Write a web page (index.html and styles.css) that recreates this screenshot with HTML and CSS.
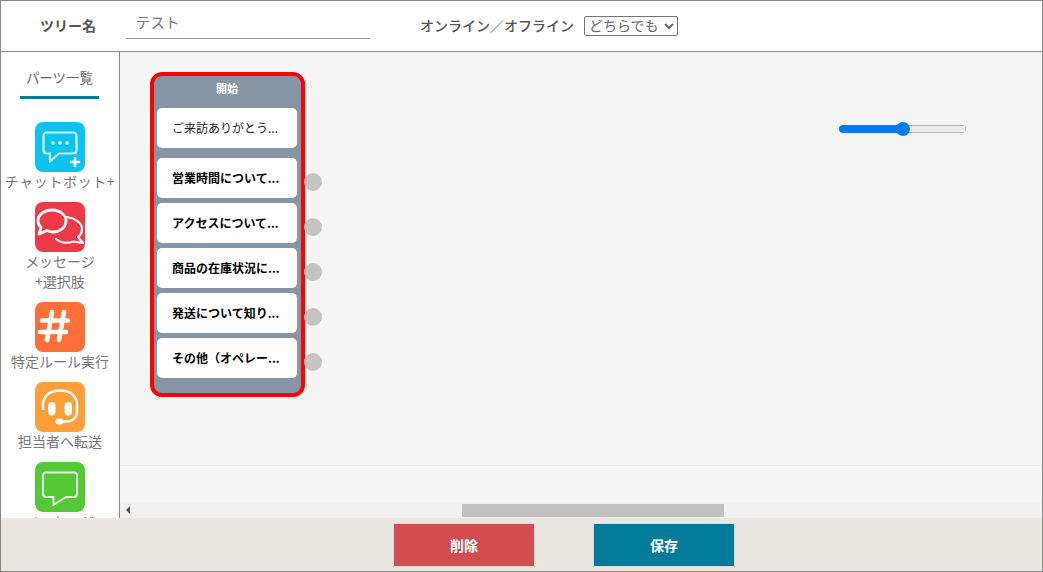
FILE: index.html
```html
<!DOCTYPE html>
<html lang="ja">
<head>
<meta charset="utf-8">
<title>ツリー</title>
<link rel="stylesheet" href="styles.css">
</head>
<body>
<div class="app">
  <header class="top">
    <label class="top-label name-label">ツリー名</label>
    <div class="name-field">テスト</div>
    <label class="top-label online-label">オンライン／オフライン</label>
    <select class="online-select"><option>どちらでも</option></select>
  </header>
  <div class="middle">
    <aside class="side">
      <div class="tab"><span class="tab-text">パーツ一覧</span></div>
      <div class="parts">
        <div class="part">
          <svg class="part-icon" viewBox="0 0 50 50"><rect width="50" height="50" rx="8" fill="#0cc3ef"/><path d="M12 10.500H38Q41.500 10.500 41.500 14V28Q41.500 31.500 38 31.500H24L15 39.500V31.500H12Q8.500 31.500 8.500 28V14Q8.500 10.500 12 10.500Z" fill="none" stroke="#fff" stroke-width="2.200" stroke-linejoin="round" opacity=".8"/><circle cx="18" cy="21" r="1.800" fill="#fff"/><circle cx="25" cy="21" r="1.800" fill="#fff"/><circle cx="32" cy="21" r="1.800" fill="#fff"/><path d="M40 36V44M36 40H44" stroke="#fff" stroke-width="2.600" stroke-linecap="round"/></svg>
          <div class="part-label part-label-wide">チャットボット+</div>
        </div>
        <div class="part">
          <svg class="part-icon" viewBox="0 0 50 50"><rect width="50" height="50" rx="8" fill="#ee3a46"/><path d="M32 15C40 16 47 21 47 27C47 30 46 33 43 35L48 41L38 39.500C31 42 26 41 21 37" fill="none" stroke="#fff" stroke-width="2.200" stroke-linejoin="round" stroke-linecap="round"/><path d="M17 8C25 8 31 13 31 19C31 26 24 30 18 30C16 30 14 29.500 12 28.500L4 32L6 25.500C4 23.500 3 21 3 18.500C3 13 9 8 17 8Z" fill="#ee3a46" stroke="#fff" stroke-width="2.800" stroke-linejoin="round"/></svg>
          <div class="part-label">メッセージ<br>+選択肢</div>
        </div>
        <div class="part">
          <svg class="part-icon" viewBox="0 0 50 50"><rect width="50" height="50" rx="8" fill="#ff6f37"/><path d="M17 10L12 38M29 10L24 38M7 18.500H33M5 30H31" fill="none" stroke="#fff" stroke-width="4.600" stroke-linecap="round"/></svg>
          <div class="part-label">特定ルール実行</div>
        </div>
        <div class="part">
          <svg class="part-icon" viewBox="0 0 50 50"><rect width="50" height="50" rx="8" fill="#ff9d36"/><path d="M8 28V23C8 14 15 8.500 25 8.500C35 8.500 42 14 42 23V29C42 35 38 39.500 32 39.500H25" fill="none" stroke="#fff" stroke-width="2.400"/><rect x="13" y="20" width="7.500" height="13.500" rx="3.700" fill="#fff"/><rect x="29.500" y="20" width="7.500" height="13.500" rx="3.700" fill="#fff"/><rect x="20.500" y="36.500" width="8" height="6" rx="3" fill="#fff"/></svg>
          <div class="part-label">担当者へ転送</div>
        </div>
        <div class="part">
          <svg class="part-icon" viewBox="0 0 50 50"><rect width="50" height="50" rx="8" fill="#55c935"/><path d="M11 10.500H39Q42 10.500 42 13.500V32Q42 35 39 35H31L18.500 43V35H11Q8 35 8 32V13.500Q8 10.500 11 10.500Z" fill="#55c935" stroke="#fff" stroke-width="2" stroke-linejoin="round" opacity=".85"/></svg>
          <div class="part-label">メッセージ</div>
        </div>
      </div>
    </aside>
    <main class="work">
      <div class="stage">
        <input class="zoom-range" type="range" min="0" max="100" value="50">
        <div class="node">
          <div class="node-title">開始</div>
          <div class="card card-intro">ご来訪ありがとう...</div>
          <div class="card card-choice">営業時間について...<span class="port"></span></div>
          <div class="card card-choice">アクセスについて...<span class="port"></span></div>
          <div class="card card-choice">商品の在庫状況に...<span class="port"></span></div>
          <div class="card card-choice">発送について知り...<span class="port"></span></div>
          <div class="card card-choice">その他（オペレー...<span class="port"></span></div>
        </div>
      </div>
      <div class="strip"></div>
      <div class="hscroll">
        <span class="hscroll-arrow"></span>
        <span class="hscroll-thumb"></span>
      </div>
    </main>
  </div>
  <footer class="bottom">
    <button class="action action-delete">削除</button>
    <button class="action action-save">保存</button>
  </footer>
</div>
</body>
</html>
```
FILE: styles.css
```css
* { box-sizing: border-box; }
html, body { margin: 0; padding: 0; overflow: hidden; }
body { font-family: "Noto Sans CJK JP", "Noto Sans", sans-serif; color: #555; }

.app {
  width: 1043px;
  height: 572px;
  border: 1px solid #888;
  display: flex;
  flex-direction: column;
  background: #fff;
}

.top {
  height: 51px;
  flex: none;
  border-bottom: 1px solid #888;
  display: flex;
  align-items: center;
  padding-left: 39px;
}
.top-label { font-size: 14px; font-weight: 500; color: #555; line-height: 20px; margin-top: -3px; }
.name-label { font-weight: 700; width: 86px; }
.name-field {
  width: 244px;
  height: 37px;
  padding: 10px 0 0 10px;
  border-bottom: 1px solid #999;
  font-size: 14.500px;
  line-height: 20px;
  color: #777;
  align-self: flex-end;
  margin-bottom: 12px;
}
.online-label { margin-left: 50px; width: 164px; }
.online-select {
  width: 94px;
  height: 20px;
  font: 14px "Liberation Sans", "Noto Sans CJK JP", sans-serif;
  color: #666;
  border: 1px solid #767676;
  border-radius: 2px;
  background: #fff;
  padding: 0;
  margin-top: -1px;
}

.middle { flex: 1; display: flex; min-height: 0; }

.side {
  width: 119px;
  flex: none;
  border-right: 1px solid #888;
  overflow: hidden;
}
.tab {
  width: 79px;
  height: 47px;
  margin: 0 0 23px 19px;
  border-bottom: 3px solid #007c9a;
  text-align: center;
  padding-top: 14px;
}
.tab-text { font-size: 13.500px; line-height: 22px; color: #666; display: block; white-space: nowrap; }
.parts { display: flex; flex-direction: column; gap: 10px; }
.part { display: flex; flex-direction: column; align-items: center; }
.part-icon { width: 50px; height: 50px; display: block; flex: none; }
.part-label {
  font-size: 14px;
  line-height: 20px;
  color: #777;
  text-align: center;
  white-space: nowrap;
  margin-top: -1px;
  margin-bottom: 1px;
}
.part-label-wide { letter-spacing: .6px; }

.work { flex: 1; display: flex; flex-direction: column; min-width: 0; background: #f5f5f5; }
.stage { position: relative; height: 414px; flex: none; border-bottom: 1px solid #ececec; }
.strip { height: 36px; flex: none; }

.zoom-range {
  position: absolute;
  left: 719px;
  top: 70px;
  width: 127px;
  height: 14px;
  margin: 0;
  appearance: none;
  -webkit-appearance: none;
  background: transparent;
}
.zoom-range::-webkit-slider-runnable-track {
  height: 8px;
  border-radius: 4px;
  background:
    linear-gradient(#007bff, #007bff) left / 50% 100% no-repeat,
    linear-gradient(#b5b5b5, #b5b5b5) right / 1px 100% no-repeat,
    linear-gradient(#b5b5b5 1px, #ececec 1px, #ececec 7px, #b5b5b5 7px);
}
.zoom-range::-webkit-slider-thumb {
  -webkit-appearance: none;
  width: 14px;
  height: 14px;
  margin-top: -3px;
  border-radius: 50%;
  background: #007bff;
}

.node {
  position: absolute;
  left: 30px;
  top: 20px;
  width: 155px;
  border: 4px solid #f00;
  border-radius: 12px;
  background: #8696a7;
  padding: 0 4px 15px 3px;
}
.node-title {
  height: 32px;
  padding-top: 4px;
  text-align: center;
  color: #fff;
  font-size: 11px;
  font-weight: 700;
  line-height: 16px;
}
.card {
  position: relative;
  height: 40px;
  padding-left: 15px;
  border-radius: 5px;
  background: #fff;
  color: #000;
  font-size: 12px;
  line-height: 40px;
  white-space: nowrap;
}
.card-intro { color: #222; margin-bottom: 10px; }
.card-choice { font-weight: 700; margin-bottom: 5px; }
.card-choice:last-child { margin-bottom: 0; }
.port {
  position: absolute;
  left: 147px;
  top: 15px;
  width: 18px;
  height: 18px;
  border-radius: 50%;
  background: #c4c4c4;
}

.hscroll {
  height: 16px;
  flex: none;
  background: #f1f1f1;
  display: flex;
  align-items: center;
}
.hscroll-arrow {
  width: 0;
  height: 0;
  margin-left: 6px;
  border-style: solid;
  border-width: 4px 4px 4px 0;
  border-color: transparent #505050 transparent transparent;
}
.hscroll-thumb {
  width: 262px;
  height: 13px;
  margin-left: 332px;
  margin-top: 1px;
  background: #c1c1c1;
}

.bottom {
  height: 53px;
  flex: none;
  background: #eae7e0;
  display: flex;
  align-items: flex-start;
  gap: 58px;
  padding: 5px 0 0 392px;
}
.action {
  width: 142px;
  height: 44px;
  border: 1px solid #dedcd6;
  color: #fff;
  font: 700 14px "Noto Sans CJK JP", sans-serif;
  padding: 0;
}
.action-delete { background: #d34c4e; }
.action-save { background: #007c9a; }
```
